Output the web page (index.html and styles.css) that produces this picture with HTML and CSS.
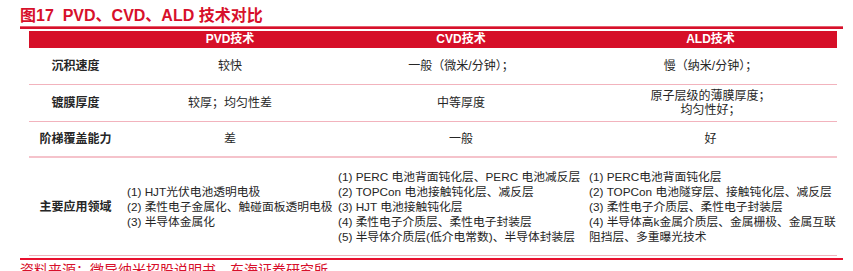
FILE: index.html
```html
<!DOCTYPE html>
<html lang="zh-CN">
<head>
<meta charset="utf-8">
<link rel="stylesheet" href="styles.css">
</head>
<body>
<div class="fig">
  <div class="title">图17&nbsp;&nbsp;PVD、CVD、ALD 技术对比</div>
  <div class="table">
    <div class="row head">
      <div class="cell"></div>
      <div class="cell">PVD技术</div>
      <div class="cell">CVD技术</div>
      <div class="cell">ALD技术</div>
    </div>
    <div class="row r1">
      <div class="cell label">沉积速度</div>
      <div class="cell">较快</div>
      <div class="cell">一般（微米/分钟）；</div>
      <div class="cell">慢（纳米/分钟）；</div>
    </div>
    <div class="row r2">
      <div class="cell label">镀膜厚度</div>
      <div class="cell">较厚；均匀性差</div>
      <div class="cell">中等厚度</div>
      <div class="cell">原子层级的薄膜厚度；<br>均匀性好；</div>
    </div>
    <div class="row r3">
      <div class="cell label">阶梯覆盖能力</div>
      <div class="cell">差</div>
      <div class="cell">一般</div>
      <div class="cell">好</div>
    </div>
    <div class="row r4">
      <div class="cell label">主要应用领域</div>
      <div class="cell list pvd">(1) HJT光伏电池透明电极<br>(2) 柔性电子金属化、触碰面板透明电极<br>(3) 半导体金属化</div>
      <div class="cell list cvd">(1) PERC 电池背面钝化层、PERC 电池减反层<br>(2) TOPCon 电池接触钝化层、减反层<br>(3) HJT 电池接触钝化层<br>(4) 柔性电子介质层、柔性电子封装层<br>(5) 半导体介质层(低介电常数)、半导体封装层</div>
      <div class="cell list ald">(1) PERC电池背面钝化层<br>(2) TOPCon 电池隧穿层、接触钝化层、减反层<br>(3) 柔性电子介质层、柔性电子封装层<br>(4) 半导体高k金属介质层、金属栅极、金属互联<br>阻挡层、多重曝光技术</div>
    </div>
  </div>
  <div class="source">资料来源：微导纳米招股说明书，东海证券研究所</div>
</div>
</body>
</html>
```

FILE: styles.css
```css
* { box-sizing: border-box; }
html, body { margin: 0; padding: 0; background: #fff; }
body {
  font-family: "Liberation Sans", "Noto Sans CJK SC", sans-serif;
  color: #262626;
}
.fig {
  margin-left: 20px;
  width: 823px;
}
.title {
  color: #d7102b;
  font-size: 16px;
  font-weight: bold;
  height: 29px;
  padding-top: 4px;
  line-height: 23px;
  border-bottom: 2px solid #d7102b;
  box-shadow: inset 0 -1px 0 #e5606f;
}
.table {
  margin-left: 9px;
  margin-top: 2px;
  width: 808px;
  font-size: 12px;
}
.row {
  display: grid;
  grid-template-columns: 93px 216px 246px 253px;
  border-bottom: 1px solid #f2b3bd;
}
.cell {
  display: flex;
  align-items: center;
  justify-content: center;
  text-align: center;
  line-height: 14px;
  white-space: nowrap;
}
.head {
  background: #d60f28;
  color: #fff;
  font-weight: bold;
  height: 17px;
  border-bottom: none;
}
.head .cell { line-height: 17px; }
.r1, .r2 { height: 37px; }
.r3 { height: 36px; border-bottom: 2px solid #f5c3cb; }
.r4 { height: 98px; }
.label { font-weight: bold; }
.list {
  justify-content: flex-start;
  text-align: left;
  line-height: 15px;
  font-size: 11.75px;
}
.pvd { padding-left: 5px; }
.cvd { padding-left: 0; }
.ald { padding-left: 5px; }
.source {
  margin-top: 2px;
  border-top: 2px solid #e8102e;
  padding-top: 2px;
  color: #d7102b;
  font-size: 14px;
  line-height: 16px;
}
```
